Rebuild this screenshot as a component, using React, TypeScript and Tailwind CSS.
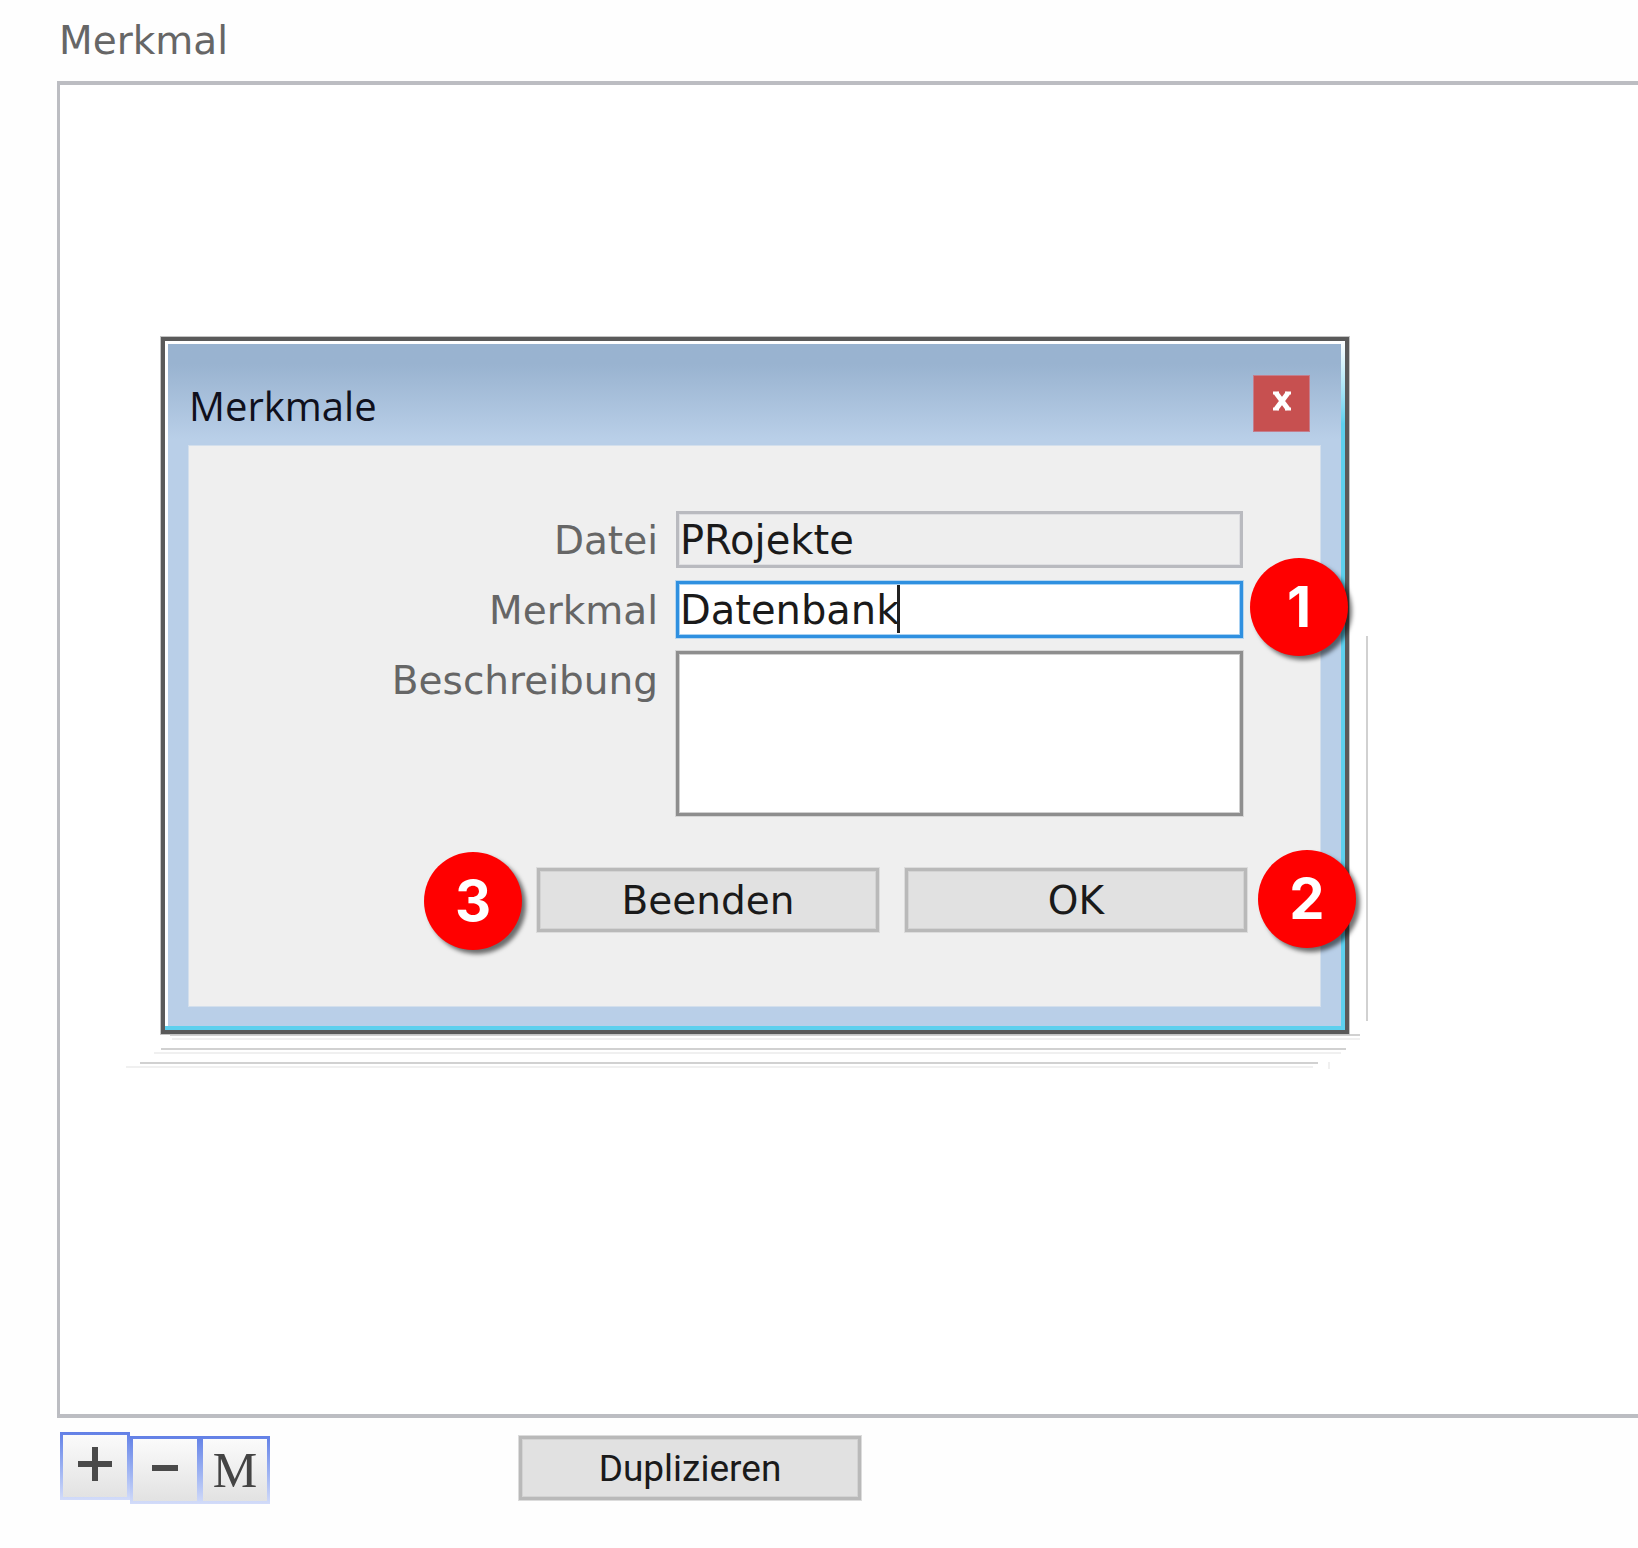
import type { ReactNode } from "react";

function Marker({ n, className }: { n: number; className: string }) {
  return (
    <span
      className={`absolute z-10 flex size-[98px] items-center justify-center rounded-full bg-[#ff0000] font-['Inter',sans-serif] text-[56px] leading-none font-bold text-white shadow-[4px_4px_4px_rgba(0,0,0,0.55)] ${className}`}
    >
      {n}
    </span>
  );
}

function PushButton({ children }: { children: ReactNode }) {
  return (
    <button
      type="button"
      className="flex h-16 w-[342px] items-center justify-center border-[3px] border-[#b9b9b9] bg-[#e1e1e1] leading-none text-[#1a1a1a] shadow-[0_0_0_1px_#dcdcdc,inset_0_0_0_1px_#d3d3d3]"
    >
      {children}
    </button>
  );
}

function ToolButton({ label, children, className = "" }: { label: string; children: ReactNode; className?: string }) {
  return (
    <button
      type="button"
      aria-label={label}
      className={`h-[68px] w-[70px] bg-linear-to-b from-[#6380e6] to-[#d3dcf9] p-[3px] ${className}`}
    >
      <span className="flex size-full items-center justify-center bg-linear-to-b from-[#fbfbfb] to-[#e2e2e2]">
        {children}
      </span>
    </button>
  );
}

function ShadowLines() {
  return (
    <svg
      aria-hidden="true"
      className="pointer-events-none absolute top-[299px] -left-[37px] h-[434px] w-[1246px]"
      viewBox="0 0 1246 434"
      shapeRendering="crispEdges"
    >
      <g fill="#d1d1d1">
        <rect x="1242" y="0" width="2" height="385" />
        <rect x="46" y="398" width="1190" height="2" />
        <rect x="37" y="412" width="1185" height="2" />
        <rect x="16" y="426" width="1178" height="2" />
      </g>
      <g fill="#f0f0f0">
        <rect x="48" y="402" width="1188" height="2" />
        <rect x="30" y="416" width="1187" height="2" />
        <rect x="2" y="430" width="1187" height="2" />
        <rect x="1204" y="426" width="2" height="7" />
      </g>
    </svg>
  );
}

function FieldLabel({ htmlFor, children }: { htmlFor: string; children: ReactNode }) {
  return (
    <label htmlFor={htmlFor} className="pt-[3px] text-right text-[39px] leading-[54px] text-[#666666]">
      {children}
    </label>
  );
}

function FeatureDialog() {
  return (
    <section role="dialog" aria-labelledby="dialog-title" className="relative w-full max-w-[1188px]">
      <ShadowLines />
      <div className="relative border-[4px] border-[#5a5a5a] shadow-[0_0_0_1px_#c4c4c4]">
        <div className="bg-linear-to-b from-white to-[#5dd0ee] to-[12%] pr-[4px] pb-[4px]">
          <div className="border-t-[3px] border-l-[3px] border-white bg-linear-to-b from-[#99b3d0] from-[20px] to-[#b9cfe8] to-[95px] px-[21px] pb-5">
            <header className="flex h-[102px] items-center justify-between pr-[10px]">
              <h1 id="dialog-title" className="pt-[22px] font-['Open_Sans',sans-serif] text-[40px] leading-none text-[#10101c]">
                Merkmale
              </h1>
              <button
                type="button"
                aria-label="Schließen"
                className="mt-4 flex size-[57px] items-center justify-center border border-[#c47d8c] bg-[#c75050]"
              >
                <svg aria-hidden="true" viewBox="0 0 20 20" className="mb-1 size-5">
                  <path d="M1 2h6M13 2h6M1 18h6M13 18h6" stroke="white" strokeWidth="3" />
                  <path d="M4 2l12 16M16 2L4 18" stroke="white" strokeWidth="5" />
                </svg>
              </button>
            </header>

            <form className="bg-[#efefef] pt-[65px] pr-[73px] pb-[74px] shadow-[0_0_0_1px_#d3dfec]">
              <div className="grid grid-cols-[1fr_567px] gap-x-[18px] gap-y-[13px] pr-[4px] text-[40px]">
                <FieldLabel htmlFor="file">Datei</FieldLabel>
                <input
                  id="file"
                  readOnly
                  defaultValue="PRojekte"
                  className="block h-[57px] w-full border-[3px] border-[#b9babf] bg-[#eeeeee] px-px text-[#1a1a1a] shadow-[inset_0_0_0_1px_#dfdfe2] outline-none"
                />
                <FieldLabel htmlFor="feature">Merkmal</FieldLabel>
                <div className="relative">
                  <input
                    id="feature"
                    defaultValue="Datenbank"
                    className="block h-[57px] w-full border-[3px] border-[#2f90e0] bg-white px-px text-[#1a1a1a] shadow-[0_0_0_1px_#b9d7ef,inset_0_0_0_1px_#a9d2f3] outline-none"
                  />
                  <span aria-hidden="true" className="absolute top-1 left-[221px] h-[48px] w-[3px] bg-[#222222]" />
                  <Marker n={1} className="-top-[23px] left-[574px]" />
                </div>
                <FieldLabel htmlFor="description">Beschreibung</FieldLabel>
                <textarea
                  id="description"
                  className="block h-[165px] w-full resize-none border-[3px] border-[#8e8e8e] bg-white px-px shadow-[0_0_0_1px_#d5d5d5,inset_0_0_0_1px_#d0d0d0] outline-none"
                />
              </div>
              <div className="mt-[52px] flex justify-end gap-[26px] text-[39px]">
                <div className="relative">
                  <PushButton>Beenden</PushButton>
                  <Marker n={3} className="-top-4 right-[357px]" />
                </div>
                <div className="relative">
                  <PushButton>OK</PushButton>
                  <Marker n={2} className="-top-[18px] left-[353px]" />
                </div>
              </div>
            </form>
          </div>
        </div>
      </div>
    </section>
  );
}

export default function App() {
  return (
    <main className="min-h-screen overflow-hidden bg-[#fefefe] pb-11 pl-[57px] font-['DejaVu_Sans',sans-serif]">
      <h2 className="flex h-[81px] items-center pl-[2px] text-[39px] leading-none text-[#666666]">Merkmal</h2>
      <div className="border-y-[4px] border-l-[3px] border-[#bcbdc2] bg-white pt-[252px] pb-[380px] pl-[101px]">
        <FeatureDialog />
      </div>
      <div className="flex items-start pt-[14px] pl-[3px]">
        <ToolButton label="Hinzufügen">
          <svg aria-hidden="true" viewBox="0 0 36 36" className="mb-1 size-9">
            <path d="M18 1v34M1 18h34" stroke="#4a4a4a" strokeWidth="6" />
          </svg>
        </ToolButton>
        <ToolButton label="Entfernen" className="mt-1">
          <svg aria-hidden="true" viewBox="0 0 26 8" className="mb-1 h-2 w-[26px]">
            <path d="M0 4h26" stroke="#4a4a4a" strokeWidth="6" />
          </svg>
        </ToolButton>
        <ToolButton label="M" className="mt-1">
          <span className="font-['Liberation_Serif',serif] text-[50px] leading-none text-[#444444]">M</span>
        </ToolButton>
        <div className="pt-1 pl-[249px] font-['Roboto',sans-serif] text-[37px]">
          <PushButton>Duplizieren</PushButton>
        </div>
      </div>
    </main>
  );
}
